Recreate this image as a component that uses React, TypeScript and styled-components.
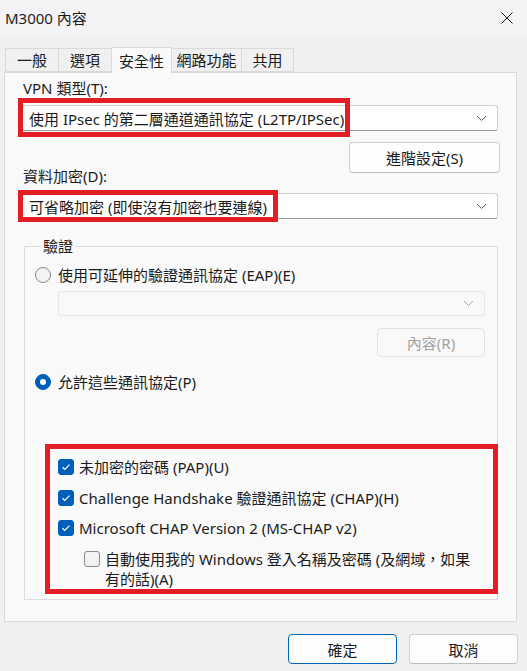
import React from "react";
import styled, { createGlobalStyle } from "styled-components";

const Global = createGlobalStyle`
  html, body { margin: 0; padding: 0; background: #f0f0f0; }
  body { font-family: "Noto Sans", "Noto Sans CJK TC", sans-serif; font-size: 15px; color: #1b1b1b; }
  * { box-sizing: border-box; }
`;

const Window = styled.div`
  width: 527px;
  height: 671px;
  display: flex;
  flex-direction: column;
  background: #f0f0f0;
  overflow: hidden;
`;

const TitleBar = styled.div`
  height: 35px;
  flex: none;
  display: flex;
  align-items: center;
  justify-content: space-between;
  padding: 0 14px 0 5px;
  background: #f3f3f6;
  font-size: 15px;
`;

const Body = styled.div`
  display: flex;
  flex-direction: column;
  padding: 12px 10px 0 4px;
`;

const TabStrip = styled.div`
  display: flex;
  align-items: flex-end;
  height: 25px;
  padding-left: 2px;
  position: relative;
  z-index: 1;
`;

const Tab = styled.div<{ $active?: boolean; $w: number }>`
  width: ${(p) => p.$w}px;
  height: ${(p) => (p.$active ? 26 : 24)}px;
  margin-bottom: ${(p) => (p.$active ? -1 : 0)}px;
  display: flex;
  align-items: center;
  justify-content: center;
  background: ${(p) => (p.$active ? "#f9f9f9" : "#f0f0f0")};
  border: 1px solid #dadada;
  border-bottom: ${(p) => (p.$active ? "none" : "1px solid #dadada")};
  margin-left: -1px;
  font-size: 15px;
  line-height: 20px;
`;

const Panel = styled.div`
  height: 550px;
  background: #f9f9f9;
  border: 1px solid #dadada;
  display: flex;
  flex-direction: column;
  padding: 5px 18px 0 17px;
`;

const Label = styled.div`
  line-height: 20px;
  height: 20px;
  padding-left: 1px;
`;

const ComboWrap = styled.div<{ $mt: number }>`
  position: relative;
  margin-top: ${(p) => p.$mt}px;
`;

const Combo = styled.div<{ $disabled?: boolean }>`
  height: ${(p) => (p.$disabled ? 25 : 26)}px;
  display: flex;
  align-items: center;
  justify-content: space-between;
  padding: 0 10px 0 6px;
  background: ${(p) => (p.$disabled ? "#f9f9f9" : "#ffffff")};
  border: 1px solid ${(p) => (p.$disabled ? "#e6e6e6" : "#d0d0d0")};
  border-bottom-color: ${(p) => (p.$disabled ? "#e6e6e6" : "#9c9c9c")};
  border-radius: 3px;
  white-space: nowrap;
`;

const Highlight = styled.div<{ $w: number }>`
  position: absolute;
  left: -4px;
  top: -7px;
  width: ${(p) => p.$w}px;
  height: 39px;
  border: 5px solid #e41c23;
  pointer-events: none;
`;

const Highlight2 = styled(Highlight)`
  top: -3px;
  height: 32px;
`;

const Chevron = ({ light }: { light?: boolean }) => (
  <svg width="11" height="7" viewBox="0 0 11 7">
    <path d="M1 1 L5.5 5.5 L10 1" fill="none" stroke={light ? "#a8a8a8" : "#606060"} strokeWidth="1" />
  </svg>
);

const ButtonLabelRow = styled.div`
  margin-top: 11px;
  min-height: 44px;
  display: flex;
  justify-content: space-between;
  align-items: flex-start;
`;

const BottomLabel = styled(Label)`
  align-self: flex-end;
`;

const Button = styled.button<{ $w: number; $h: number; $primary?: boolean; $disabled?: boolean }>`
  width: ${(p) => p.$w}px;
  height: ${(p) => p.$h}px;
  font-family: inherit;
  font-size: 15px;
  color: ${(p) => (p.$disabled ? "#a2a2a2" : "#1b1b1b")};
  background: ${(p) => (p.$disabled ? "#f9f9f9" : "#fdfdfd")};
  border: 1px solid ${(p) => (p.$primary ? "#0067c0" : p.$disabled ? "#e3e3e3" : "#d0d0d0")};
  border-bottom-color: ${(p) => (p.$primary ? "#0067c0" : p.$disabled ? "#e3e3e3" : "#bcbcbc")};
  border-radius: 4px;
  padding: 0;
`;

const AdvButton = styled(Button)`
  margin-right: -2px;
`;

const Group = styled.fieldset`
  margin: 17px 0 0 2px;
  width: 474px;
  height: 364px;
  border: 1px solid #dcdcdc;
  padding: 0 12px 0 10px;
  display: flex;
  flex-direction: column;
`;

const Legend = styled.legend`
  padding: 0 2px;
  margin-left: 6px;
  line-height: 20px;
`;

const OptionRow = styled.div<{ $mt: number }>`
  margin-top: ${(p) => p.$mt}px;
  display: flex;
  align-items: center;
  gap: 7px;
  line-height: 20px;
`;

const Radio = styled.span<{ $on?: boolean }>`
  width: 16px;
  height: 16px;
  border-radius: 50%;
  flex: none;
  background: ${(p) => (p.$on ? "#005fb8" : "#f3f3f3")};
  border: 1px solid ${(p) => (p.$on ? "#005fb8" : "#8b8b8b")};
  display: flex;
  align-items: center;
  justify-content: center;
  &::after {
    content: "";
    display: ${(p) => (p.$on ? "block" : "none")};
    width: 6px;
    height: 6px;
    border-radius: 50%;
    background: #ffffff;
  }
`;

const SubCombo = styled.div`
  margin: 6px 0 0 23px;
`;

const SubButtonRow = styled.div`
  margin-top: 12px;
  display: flex;
  justify-content: flex-end;
`;

const CheckFrame = styled.div`
  margin: 52px -13px 0 10px;
  border: 5px solid #e41c23;
  height: 150px;
  padding: 8px 0 0 8px;
  display: flex;
  flex-direction: column;
`;

const CheckRow = styled.div<{ $indent?: boolean; $mt: number }>`
  display: flex;
  align-items: flex-start;
  gap: 5px;
  margin-top: ${(p) => p.$mt}px;
  padding-left: ${(p) => (p.$indent ? 26 : 0)}px;
  line-height: 20px;
`;

const Box = styled.span<{ $on?: boolean }>`
  width: 16px;
  height: 16px;
  margin-top: 2px;
  flex: none;
  border-radius: 3px;
  background: ${(p) => (p.$on ? "#005fb8" : "#f3f3f3")};
  border: 1px solid ${(p) => (p.$on ? "#005fb8" : "#8b8b8b")};
  display: flex;
  align-items: center;
  justify-content: center;
`;

const Footer = styled.div`
  display: flex;
  justify-content: flex-end;
  gap: 12px;
  padding-top: 12px;
  margin-right: -1px;
`;

const Check = () => (
  <svg width="10" height="8" viewBox="0 0 10 8">
    <path d="M1.5 4.2 L3.8 6.4 L8.5 1.6" fill="none" stroke="#ffffff" strokeWidth="1.2" />
  </svg>
);

const Close = () => (
  <svg width="12" height="12" viewBox="0 0 12 12">
    <path d="M0.5 0.5 L11.5 11.5 M11.5 0.5 L0.5 11.5" stroke="#1b1b1b" strokeWidth="1" />
  </svg>
);

export default function App() {
  return (
    <Window>
      <Global />
      <TitleBar>
        <span>M3000 內容</span>
        <Close />
      </TitleBar>
      <Body>
        <TabStrip>
          <Tab $w={54}>一般</Tab>
          <Tab $w={54}>選項</Tab>
          <Tab $w={61} $active>安全性</Tab>
          <Tab $w={71}>網路功能</Tab>
          <Tab $w={53}>共用</Tab>
        </TabStrip>
        <Panel>
          <Label>VPN 類型(T):</Label>
          <ComboWrap $mt={7}>
            <Combo>
              <span>使用 IPsec 的第二層通道通訊協定 (L2TP/IPSec)</span>
              <Chevron />
            </Combo>
            <Highlight $w={332} />
          </ComboWrap>
          <ButtonLabelRow>
            <BottomLabel>資料加密(D):</BottomLabel>
            <AdvButton $w={151} $h={31}>進階設定(S)</AdvButton>
          </ButtonLabelRow>
          <ComboWrap $mt={7}>
            <Combo>
              <span>可省略加密 (即使沒有加密也要連線)</span>
              <Chevron />
            </Combo>
            <Highlight2 $w={260} />
          </ComboWrap>
          <Group>
            <Legend>驗證</Legend>
            <OptionRow $mt={9}>
              <Radio />
              <span>使用可延伸的驗證通訊協定 (EAP)(E)</span>
            </OptionRow>
            <SubCombo>
              <Combo $disabled>
                <span />
                <Chevron light />
              </Combo>
            </SubCombo>
            <SubButtonRow>
              <Button $w={108} $h={29} $disabled>內容(R)</Button>
            </SubButtonRow>
            <OptionRow $mt={15}>
              <Radio $on />
              <span>允許這些通訊協定(P)</span>
            </OptionRow>
            <CheckFrame>
              <CheckRow $mt={0}>
                <Box $on><Check /></Box>
                <span>未加密的密碼 (PAP)(U)</span>
              </CheckRow>
              <CheckRow $mt={11}>
                <Box $on><Check /></Box>
                <span>Challenge Handshake 驗證通訊協定 (CHAP)(H)</span>
              </CheckRow>
              <CheckRow $mt={10}>
                <Box $on><Check /></Box>
                <span>Microsoft CHAP Version 2 (MS-CHAP v2)</span>
              </CheckRow>
              <CheckRow $mt={11} $indent>
                <Box />
                <span>
                  自動使用我的 Windows 登入名稱及密碼 (及網域，如果
                  <br />
                  有的話)(A)
                </span>
              </CheckRow>
            </CheckFrame>
          </Group>
        </Panel>
        <Footer>
          <Button $w={109} $h={30} $primary>確定</Button>
          <Button $w={109} $h={30}>取消</Button>
        </Footer>
      </Body>
    </Window>
  );
}
